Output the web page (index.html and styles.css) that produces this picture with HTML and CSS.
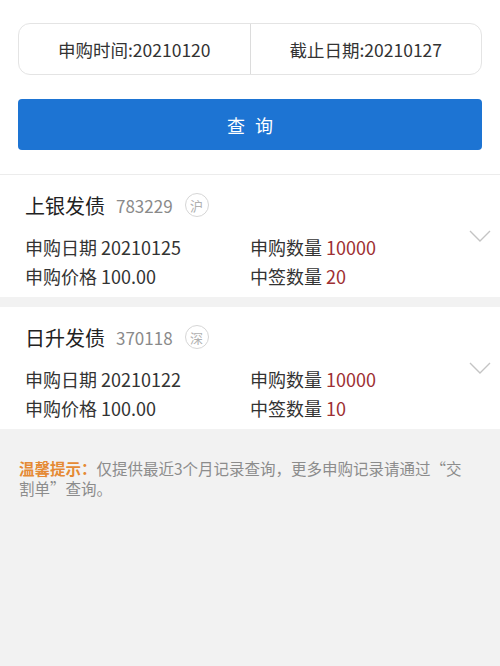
FILE: index.html
```html
<!DOCTYPE html>
<html lang="zh-CN">
<head>
  <meta charset="UTF-8" />
  <meta name="viewport" content="width=device-width, initial-scale=1.0" />
  <title>申购查询</title>
  <link rel="stylesheet" href="styles.css">
</head>
<body>
  <div class="query">
    <div class="date-box">
      <div class="date-cell">申购时间:20210120</div>
      <div class="date-cell">截止日期:20210127</div>
    </div>
    <button class="query-button" type="button">查询</button>
  </div>

  <div class="card">
    <div class="card-title">
      <span class="name">上银发债</span>
      <span class="code">783229</span>
      <span class="market">沪</span>
    </div>
    <div class="card-rows">
      <div>申购日期 20210125</div>
      <div>申购数量 <span class="num">10000</span></div>
      <div>申购价格 100.00</div>
      <div>中签数量 <span class="num">20</span></div>
    </div>
    <svg class="arrow" width="22" height="12" viewBox="0 0 22 12"><path d="M1 1 L11 11 L21 1" fill="none" stroke="#c4c4c4" stroke-width="1.4"/></svg>
  </div>

  <div class="card">
    <div class="card-title">
      <span class="name">日升发债</span>
      <span class="code">370118</span>
      <span class="market">深</span>
    </div>
    <div class="card-rows">
      <div>申购日期 20210122</div>
      <div>申购数量 <span class="num">10000</span></div>
      <div>申购价格 100.00</div>
      <div>中签数量 <span class="num">10</span></div>
    </div>
    <svg class="arrow" width="22" height="12" viewBox="0 0 22 12"><path d="M1 1 L11 11 L21 1" fill="none" stroke="#c4c4c4" stroke-width="1.4"/></svg>
  </div>

  <p class="tip"><span class="tip-label">温馨提示：</span>仅提供最近3个月记录查询，更多申购记录请通过“交割单”查询。</p>
</body>
</html>
```

FILE: styles.css
```css
* { box-sizing: border-box; margin: 0; padding: 0; }
body {
  font-family: "Noto Sans CJK SC", "Noto Sans", sans-serif;
  background: #f2f2f2;
  color: #333;
}
.query {
  background: white;
  padding: 23px 18px 24px;
  border-bottom: 1px solid #ececec;
}
.date-box {
  display: flex;
  height: 52px;
  border: 1px solid #e4e4e4;
  border-radius: 12px;
}
.date-cell {
  flex: 1;
  display: flex;
  justify-content: center;
  align-items: center;
  font-size: 17.5px;
  color: #333;
}
.date-cell + .date-cell {
  border-left: 1px solid #dcdcdc;
}
.query-button {
  display: block;
  width: 100%;
  height: 51px;
  margin-top: 24px;
  border: none;
  border-radius: 4px;
  background: #1d74d3;
  color: white;
  font-family: inherit;
  font-size: 18px;
  letter-spacing: 10px;
  text-indent: 10px;
}
.card {
  position: relative;
  background: white;
  padding: 10px 25px 6px;
  margin-bottom: 10px;
}
.card + .card {
  margin-bottom: 0;
}
.card-title {
  display: flex;
  align-items: center;
  height: 40px;
}
.card-title .name {
  font-size: 20px;
  color: #222;
}
.card-title .code {
  font-size: 17px;
  color: #8a8a8a;
  margin-left: 11px;
}
.card-title .market {
  display: flex;
  justify-content: center;
  align-items: center;
  width: 24px;
  height: 24px;
  margin-left: 12px;
  border: 1.5px solid #d6d6d6;
  border-radius: 50%;
  font-size: 13px;
  color: #b0b0b0;
}
.card-rows {
  display: grid;
  grid-template-columns: 225px 1fr;
  margin-top: 8px;
  font-size: 18px;
  line-height: 29px;
  color: #333;
}
.num {
  color: #9e2f33;
}
.arrow {
  position: absolute;
  top: 55px;
  right: 9px;
}
.tip {
  padding: 29px 30px 0 19px;
  font-size: 15.5px;
  line-height: 20px;
  color: #8c8c8c;
}
.tip-label {
  color: #e58a35;
  font-weight: bold;
}
```
